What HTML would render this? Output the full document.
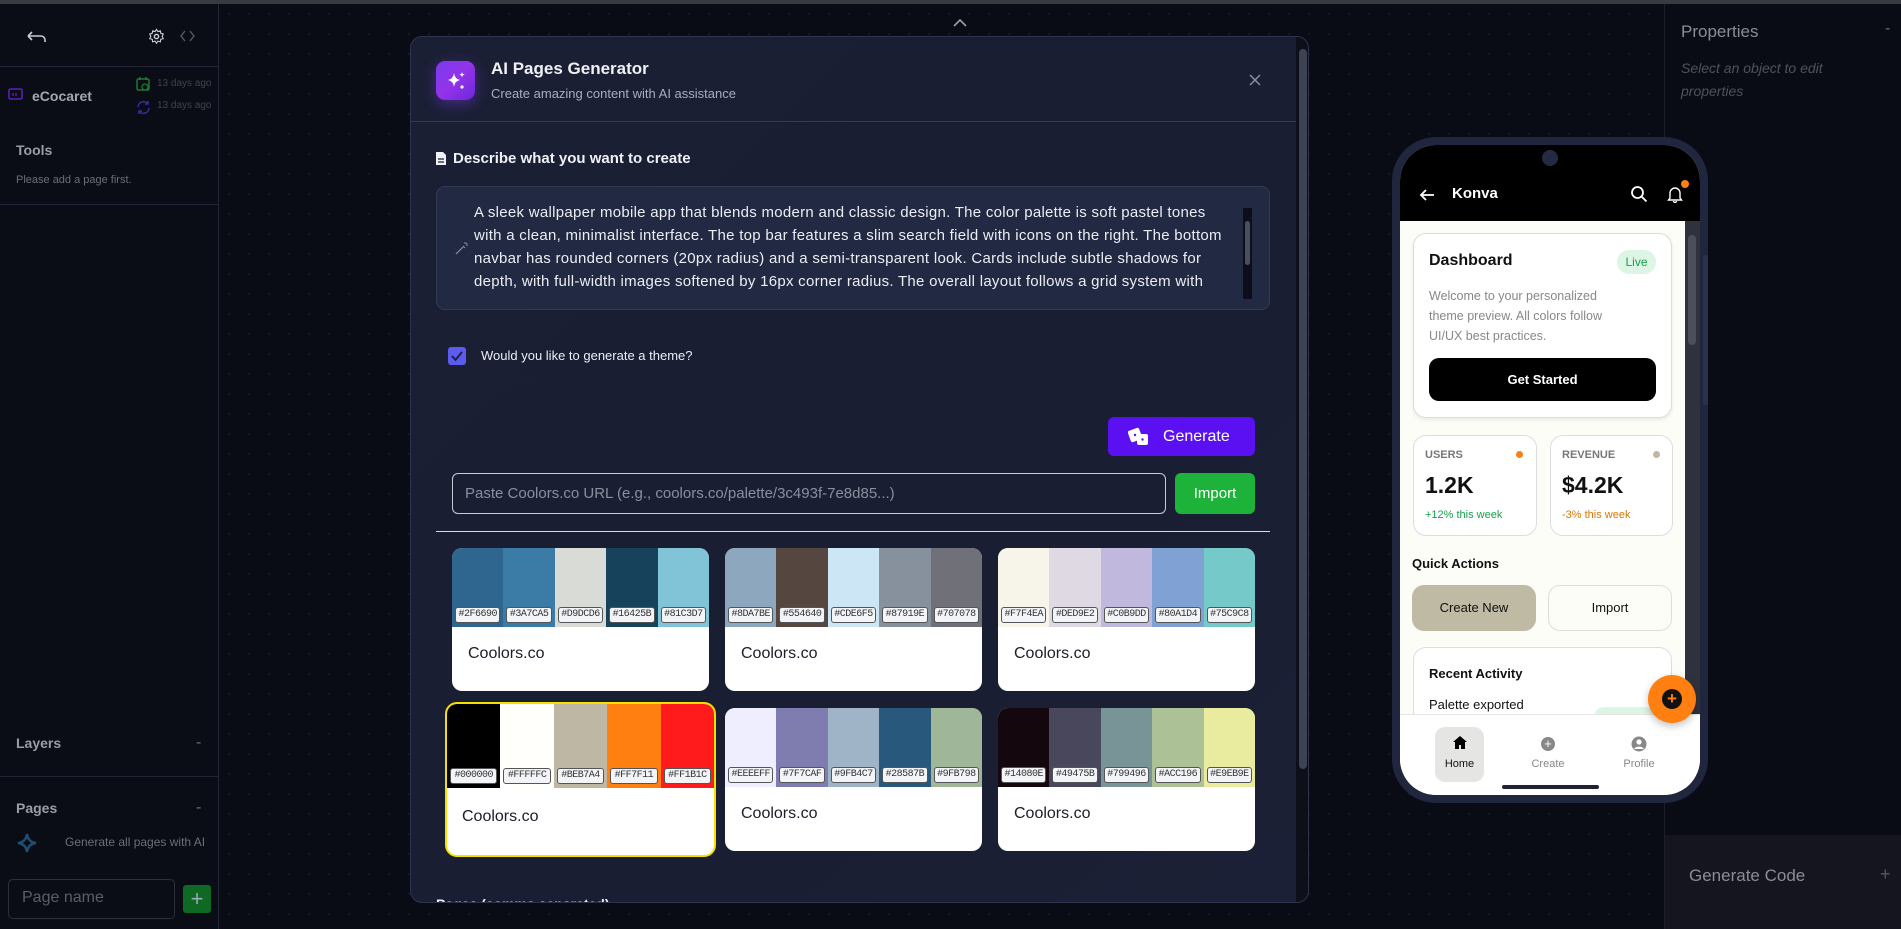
<!DOCTYPE html>
<html><head><meta charset="utf-8"><style>
*{box-sizing:border-box;margin:0;padding:0}
body{width:1901px;height:929px;overflow:hidden;background:#0a0c15;font-family:"Liberation Sans",sans-serif;position:relative;color:#e5e7eb}
.a{position:absolute}
.canvas{left:219px;top:4px;width:1445px;height:925px;background-color:#0a0c15;background-image:radial-gradient(#1a1d29 1px,transparent 1px);background-size:20px 20px}
.side{left:0;top:4px;width:219px;height:925px;background:#0b0d16;border-right:1px solid #232636}
.hr{height:1px;background:#232636}
.modal{left:410px;top:36px;width:899px;height:867px;background:linear-gradient(135deg,#1b1f34,#1a1e32 60%,#1b2036);border:1px solid #2e3450;border-radius:12px;overflow:hidden}
.card{position:absolute;width:257px;height:143px;background:#fff;border-radius:10px;overflow:hidden}
.strip{display:flex;height:79px}
.strip div{flex:1;position:relative}
.strip span{position:absolute;bottom:4px;left:3px;right:3px;height:16px;background:#f2f4f8;border:1px solid #555;border-radius:3px;font:10px "Liberation Mono",monospace;letter-spacing:-0.5px;color:#333;text-align:center;line-height:14px;overflow:hidden;white-space:nowrap}
.card p{position:absolute;left:16px;top:97px;color:#1a1d2a;font-size:16px}
.phone{left:1392px;top:137px;width:316px;height:666px;background:#20263d;border-radius:44px}
.screen{left:1400px;top:145px;width:300px;height:650px;background:#fdfdf8;border-radius:36px;overflow:hidden}
.pc{position:absolute;background:#fff;border:1px solid #ddd;border-radius:13px}
</style></head><body>
<div class="a" style="left:0;top:0;width:1901px;height:4px;background:#3a3b40"></div>
<div class="a canvas"></div>
<svg class="a" style="left:951px;top:17px" width="18" height="12"><path d="M3 9l6-6 6 6" stroke="#9aa0ad" stroke-width="1.6" fill="none"/></svg>

<div class="a side">
 <svg class="a" style="left:24px;top:24px" width="24" height="18"><path d="M4 8h13a4 4 0 0 1 4 4v2M4 8l4-4M4 8l4 4" stroke="#c9ccd3" stroke-width="1.6" fill="none"/></svg>
 <svg class="a" style="left:148px;top:24px" width="17" height="17" viewBox="0 0 24 24"><circle cx="12" cy="12" r="3" stroke="#c9ccd3" stroke-width="2" fill="none"/><path d="M12 2l2 3 3.5-1 .5 3.5 3.5 1-1.5 3.5 1.5 3-3.5 1-.5 3.5-3.5-1-2 3-2-3-3.5 1-.5-3.5-3.5-1 1.5-3-1.5-3.5 3.5-1 .5-3.5 3.5 1z" stroke="#c9ccd3" stroke-width="1.6" fill="none"/></svg>
 <svg class="a" style="left:180px;top:26px" width="15" height="12"><path d="M5 1L1 6l4 5M10 1l4 5-4 5" stroke="#5a5e6b" stroke-width="1.3" fill="none"/></svg>
 <div class="a hr" style="left:0;top:62px;width:219px"></div>
 <svg class="a" style="left:8px;top:83px" width="16" height="14"><rect x="1" y="2" width="13" height="10" rx="1.5" stroke="#5b21b6" stroke-width="1.6" fill="none"/><path d="M5 6v3M8 6v3" stroke="#5b21b6" stroke-width="1.4"/></svg>
 <div class="a" style="left:32px;top:84px;font-size:14px;font-weight:bold;color:#a4a7b0">eCocaret</div>
 <svg class="a" style="left:136px;top:73px" width="15" height="15"><rect x="1" y="2" width="12" height="11" rx="1.5" stroke="#1e7a2e" stroke-width="1.5" fill="none"/><path d="M4 0v3M10 0v3" stroke="#1e7a2e" stroke-width="1.5"/><circle cx="9" cy="10" r="3" stroke="#1e7a2e" stroke-width="1.3" fill="#0b0d16"/></svg>
 <div class="a" style="left:157px;top:74px;font-size:10px;color:#3e4250">13 days ago</div>
 <svg class="a" style="left:136px;top:96px" width="15" height="15"><path d="M2 7a5.5 5.5 0 0 1 10-3M13 8a5.5 5.5 0 0 1-10 3M12 1v3H9M3 14v-3h3" stroke="#3b2a9a" stroke-width="1.5" fill="none"/></svg>
 <div class="a" style="left:157px;top:96px;font-size:10px;color:#3e4250">13 days ago</div>
 <div class="a" style="left:16px;top:138px;font-size:14px;font-weight:bold;color:#9a9da6">Tools</div>
 <div class="a" style="left:16px;top:170px;font-size:11px;color:#6b6e78">Please add a page first.</div>
 <div class="a hr" style="left:0;top:200px;width:219px"></div>
 <div class="a" style="left:16px;top:731px;font-size:14px;font-weight:bold;color:#9a9da6">Layers</div>
 <div class="a" style="left:196px;top:730px;color:#6b6e78">-</div>
 <div class="a hr" style="left:0;top:772px;width:219px"></div>
 <div class="a" style="left:16px;top:796px;font-size:14px;font-weight:bold;color:#9a9da6">Pages</div>
 <div class="a" style="left:196px;top:795px;color:#6b6e78">-</div>
 <svg class="a" style="left:17px;top:829px" width="20" height="20"><path d="M10 1q1 8 9 9q-8 1-9 9q-1-8-9-9q8-1 9-9z" stroke="#1e4f6e" stroke-width="2.5" fill="none"/></svg>
 <div class="a" style="left:65px;top:831px;font-size:12px;color:#6b6e78">Generate all pages with AI</div>
 <div class="a" style="left:8px;top:875px;width:167px;height:40px;border:1px solid #2c2f3c;border-radius:5px"></div>
 <div class="a" style="left:22px;top:885px;font-size:16px;color:#5a5e6b">Page name</div>
 <div class="a" style="left:183px;top:881px;width:28px;height:28px;background:#0e6a22;border-radius:3px;color:#9ab;font-size:22px;text-align:center;line-height:27px">+</div>
</div>

<div class="a" style="left:1664px;top:4px;width:237px;height:925px;background:#0a0c15;border-left:1px solid #1c1f2a"></div>
<div class="a" style="left:1681px;top:22px;font-size:17px;color:#8a8d96">Properties</div>
<div class="a" style="left:1885px;top:20px;color:#6b6e78">-</div>
<div class="a" style="left:1681px;top:57px;font-size:14px;font-style:italic;color:#4e525e;line-height:23px">Select an object to edit<br>properties</div>
<div class="a" style="left:1665px;top:835px;width:236px;height:94px;background:#14151f"></div>
<div class="a" style="left:1689px;top:866px;font-size:17px;color:#8a8d96">Generate Code</div>
<div class="a" style="left:1880px;top:864px;font-size:18px;color:#555a66">+</div>

<div class="a modal">
 <div class="a" style="left:25px;top:24px;width:39px;height:39px;border-radius:9px;background:linear-gradient(135deg,#7c3aed,#9333ea 50%,#6d28d9);box-shadow:0 4px 14px rgba(124,58,237,.45)"></div>
 <svg class="a" style="left:34px;top:33px" width="22" height="22"><path d="M9 3q.8 6 6 7q-5.2 1-6 7q-.8-6-6-7q5.2-1 6-7z" fill="#fff"/><path d="M17 2l.7 2 2 .7-2 .7-.7 2-.7-2-2-.7 2-.7z" fill="#fff"/><circle cx="17" cy="17" r="1.6" fill="#fff"/></svg>
 <div class="a" style="left:80px;top:22px;font-size:17px;font-weight:bold;color:#f0f1f5">AI Pages Generator</div>
 <div class="a" style="left:80px;top:49px;font-size:13px;color:#a8adbd">Create amazing content with AI assistance</div>
 <svg class="a" style="left:837px;top:36px" width="14" height="14"><path d="M2 2l10 10M12 2L2 12" stroke="#8a8f9e" stroke-width="1.5"/></svg>
 <div class="a" style="left:0;top:84px;width:885px;height:1px;background:#343a52"></div>
 <svg class="a" style="left:24px;top:114px" width="12" height="15"><path d="M1 1h7l3 3v10H1z" fill="#f0f1f5"/><path d="M3 8h6M3 11h6" stroke="#1b1f34" stroke-width="1.2"/></svg>
 <div class="a" style="left:42px;top:113px;font-size:15px;font-weight:bold;color:#f0f1f5">Describe what you want to create</div>
 <div class="a" style="left:25px;top:149px;width:834px;height:124px;background:#222942;border:1px solid #323a55;border-radius:9px"></div>
 <svg class="a" style="left:44px;top:204px" width="14" height="14"><path d="M1 13l8-8" stroke="#8a8f9e" stroke-width="1.2"/><path d="M10 1v2M13 4h-2M12 2l-1 1M9 6l1 1" stroke="#8a8f9e" stroke-width="1"/></svg>
 <div class="a" style="left:63px;top:164px;width:762px;font-size:15px;line-height:23px;color:#eceef3;height:100px;overflow:hidden;letter-spacing:0.28px">A sleek wallpaper mobile app that blends modern and classic design. The color palette is soft pastel tones with a clean, minimalist interface. The top bar features a slim search field with icons on the right. The bottom navbar has rounded corners (20px radius) and a semi-transparent look. Cards include subtle shadows for depth, with full-width images softened by 16px corner radius. The overall layout follows a grid system with</div>
 <div class="a" style="left:832px;top:171px;width:9px;height:91px;background:#0c0f1a"></div>
 <div class="a" style="left:834px;top:184px;width:5px;height:44px;background:#4a4f60;border-radius:3px"></div>
 <div class="a" style="left:37px;top:310px;width:18px;height:18px;background:#5b5bf0;border-radius:3px"></div>
 <svg class="a" style="left:39px;top:313px" width="14" height="12"><path d="M2 6l3.5 4L12 2" stroke="#1b1f34" stroke-width="1.8" fill="none"/></svg>
 <div class="a" style="left:70px;top:311px;font-size:13px;color:#eceef3">Would you like to generate a theme?</div>
 <div class="a" style="left:697px;top:380px;width:147px;height:39px;background:#5b10f2;border-radius:6px;color:#fff;font-size:16px;line-height:39px;padding-left:55px">Generate</div>
 <svg class="a" style="left:717px;top:390px" width="22" height="20"><rect x="1" y="2" width="12" height="12" rx="2" transform="rotate(-20 7 8)" fill="#fff"/><rect x="9" y="7" width="11" height="11" rx="2" fill="#fff"/><circle cx="7" cy="8" r="1.2" fill="#5b10f2"/><circle cx="14.5" cy="12.5" r="1.2" fill="#5b10f2"/></svg>
 <div class="a" style="left:41px;top:436px;width:714px;height:41px;border:1px solid #c8ccd6;border-radius:6px;font-size:15px;color:#8a8f9e;line-height:39px;padding-left:12px">Paste Coolors.co URL (e.g., coolors.co/palette/3c493f-7e8d85...)</div>
 <div class="a" style="left:764px;top:436px;width:80px;height:41px;background:#1db33b;border-radius:6px;color:#fff;font-size:15px;text-align:center;line-height:41px">Import</div>
 <div class="a" style="left:25px;top:494px;width:834px;height:1px;background:#d8dbe2"></div>

 <div class="card" style="left:41px;top:511px"><div class="strip"><div style="background:#2F6690"><span>#2F6690</span></div><div style="background:#3A7CA5"><span>#3A7CA5</span></div><div style="background:#D9DCD6"><span>#D9DCD6</span></div><div style="background:#16425B"><span>#16425B</span></div><div style="background:#81C3D7"><span>#81C3D7</span></div></div><p>Coolors.co</p></div>
 <div class="card" style="left:314px;top:511px"><div class="strip"><div style="background:#8DA7BE"><span>#8DA7BE</span></div><div style="background:#554640"><span>#554640</span></div><div style="background:#CDE6F5"><span>#CDE6F5</span></div><div style="background:#87919E"><span>#87919E</span></div><div style="background:#707078"><span>#707078</span></div></div><p>Coolors.co</p></div>
 <div class="card" style="left:587px;top:511px"><div class="strip"><div style="background:#F7F4EA"><span>#F7F4EA</span></div><div style="background:#DED9E2"><span>#DED9E2</span></div><div style="background:#C0B9DD"><span>#C0B9DD</span></div><div style="background:#80A1D4"><span>#80A1D4</span></div><div style="background:#75C9C8"><span>#75C9C8</span></div></div><p>Coolors.co</p></div>
 <div class="card" style="left:34px;top:665px;width:271px;height:155px;border:2px solid #f5e000;border-radius:12px"><div class="strip" style="height:84px"><div style="background:#000000"><span>#000000</span></div><div style="background:#FFFFFC"><span>#FFFFFC</span></div><div style="background:#BEB7A4"><span>#BEB7A4</span></div><div style="background:#FF7F11"><span>#FF7F11</span></div><div style="background:#FF1B1C"><span>#FF1B1C</span></div></div><p style="top:104px;left:15px">Coolors.co</p></div>
 <div class="card" style="left:314px;top:671px"><div class="strip"><div style="background:#EEEEFF"><span>#EEEEFF</span></div><div style="background:#7F7CAF"><span>#7F7CAF</span></div><div style="background:#9FB4C7"><span>#9FB4C7</span></div><div style="background:#28587B"><span>#28587B</span></div><div style="background:#9FB798"><span>#9FB798</span></div></div><p>Coolors.co</p></div>
 <div class="card" style="left:587px;top:671px"><div class="strip"><div style="background:#14080E"><span>#14080E</span></div><div style="background:#49475B"><span>#49475B</span></div><div style="background:#799496"><span>#799496</span></div><div style="background:#ACC196"><span>#ACC196</span></div><div style="background:#E9EB9E"><span>#E9EB9E</span></div></div><p>Coolors.co</p></div>
 <div class="a" style="left:25px;top:859px;font-size:14px;font-weight:bold;color:#eceef3">Pages (comma separated)</div>
 <div class="a" style="left:885px;top:0;width:14px;height:867px;background:#0d1019"></div>
 <div class="a" style="left:888px;top:12px;width:8px;height:720px;background:#3e4352;border-radius:4px"></div>
</div>

<div class="a phone"></div>
<div class="a" style="left:1703px;top:255px;width:5px;height:150px;background:#2a3150;border-radius:2px"></div>
<div class="a screen">
 <div class="a" style="left:0;top:0;width:300px;height:76px;background:#000"></div>
 <div class="a" style="left:142px;top:5px;width:16px;height:16px;border-radius:50%;background:#242a42"></div>
 <svg class="a" style="left:18px;top:42px" width="18" height="16"><path d="M16 8H3M8 3L3 8l5 5" stroke="#fff" stroke-width="1.8" fill="none"/></svg>
 <div class="a" style="left:52px;top:40px;font-size:15px;font-weight:bold;color:#fff">Konva</div>
 <svg class="a" style="left:230px;top:40px" width="18" height="18"><circle cx="7.5" cy="7.5" r="5.5" stroke="#fff" stroke-width="1.8" fill="none"/><path d="M11.5 11.5l5 5" stroke="#fff" stroke-width="1.8"/></svg>
 <svg class="a" style="left:266px;top:40px" width="18" height="18"><path d="M4 13V8a5 5 0 0 1 10 0v5l1.5 2h-13zM7.5 16a1.5 1.5 0 0 0 3 0" stroke="#fff" stroke-width="1.4" fill="none"/></svg>
 <div class="a" style="left:281px;top:35px;width:8px;height:8px;border-radius:50%;background:#ff7f11"></div>
 <div class="a" style="left:285px;top:76px;width:15px;height:493px;background:#2e323c"></div>
 <div class="a" style="left:288px;top:90px;width:8px;height:110px;background:#4a4f5b;border-radius:4px"></div>
 <div class="pc" style="left:13px;top:88px;width:259px;height:185px;box-shadow:0 2px 4px rgba(0,0,0,.08)"></div>
 <div class="a" style="left:29px;top:107px;font-size:16px;font-weight:bold;color:#111">Dashboard</div>
 <div class="a" style="left:217px;top:105px;width:39px;height:24px;border-radius:12px;background:#dcf5e4;color:#15a34a;font-size:12px;text-align:center;line-height:24px">Live</div>
 <div class="a" style="left:29px;top:141px;width:200px;font-size:12.5px;line-height:20px;color:#888">Welcome to your personalized theme preview. All colors follow UI/UX best practices.</div>
 <div class="a" style="left:29px;top:213px;width:227px;height:43px;background:#000;border-radius:10px;color:#fff;font-size:13px;font-weight:bold;text-align:center;line-height:43px">Get Started</div>
 <div class="pc" style="left:13px;top:290px;width:124px;height:101px"></div>
 <div class="a" style="left:25px;top:304px;font-size:11px;font-weight:bold;color:#777">USERS</div>
 <div class="a" style="left:116px;top:306px;width:7px;height:7px;border-radius:50%;background:#ff7f11"></div>
 <div class="a" style="left:25px;top:327px;font-size:23px;font-weight:bold;color:#111">1.2K</div>
 <div class="a" style="left:25px;top:364px;font-size:11px;color:#16a34a">+12% this week</div>
 <div class="pc" style="left:150px;top:290px;width:123px;height:101px"></div>
 <div class="a" style="left:162px;top:304px;font-size:11px;font-weight:bold;color:#777">REVENUE</div>
 <div class="a" style="left:253px;top:306px;width:7px;height:7px;border-radius:50%;background:#beb7a4"></div>
 <div class="a" style="left:162px;top:327px;font-size:23px;font-weight:bold;color:#111">$4.2K</div>
 <div class="a" style="left:162px;top:364px;font-size:11px;color:#d97706">-3% this week</div>
 <div class="a" style="left:12px;top:411px;font-size:13px;font-weight:bold;color:#111">Quick Actions</div>
 <div class="a" style="left:12px;top:440px;width:124px;height:46px;background:#bebaa4;border-radius:12px;font-size:13px;color:#111;text-align:center;line-height:46px">Create New</div>
 <div class="a" style="left:148px;top:440px;width:124px;height:46px;border:1px solid #ddd;border-radius:12px;font-size:13px;color:#111;text-align:center;line-height:44px">Import</div>
 <div class="pc" style="left:13px;top:502px;width:259px;height:90px"></div>
 <div class="a" style="left:29px;top:521px;font-size:13px;font-weight:bold;color:#111">Recent Activity</div>
 <div class="a" style="left:29px;top:552px;font-size:13px;color:#111">Palette exported</div>
 <div class="a" style="left:194px;top:562px;width:60px;height:20px;border-radius:10px;background:#dcf5e4"></div>
 <div class="a" style="left:0;top:569px;width:300px;height:81px;background:#fff;border-top:1px solid #e5e5e5"></div>
 <div class="a" style="left:35px;top:582px;width:49px;height:55px;background:#e5e5e3;border-radius:10px"></div>
 <svg class="a" style="left:52px;top:590px" width="16" height="15"><path d="M8 1L1 7h2v7h4v-4h2v4h4V7h2z" fill="#000"/></svg>
 <div class="a" style="left:35px;top:613px;width:49px;text-align:center;font-size:11px;color:#111">Home</div>
 <div class="a" style="left:141px;top:592px;width:14px;height:14px;border-radius:50%;background:#888;color:#fff;font-size:13px;text-align:center;line-height:14px">+</div>
 <div class="a" style="left:126px;top:613px;width:44px;text-align:center;font-size:11px;color:#888">Create</div>
 <svg class="a" style="left:231px;top:591px" width="16" height="16"><circle cx="8" cy="8" r="7.5" fill="#888"/><circle cx="8" cy="6" r="2.6" fill="#fff"/><path d="M3 13a5.5 4 0 0 1 10 0" fill="#fff"/></svg>
 <div class="a" style="left:214px;top:613px;width:50px;text-align:center;font-size:11px;color:#888">Profile</div>
 <div class="a" style="left:102px;top:640px;width:97px;height:4px;border-radius:2px;background:#1e2338"></div>
</div>
<div class="a" style="left:1648px;top:675px;width:48px;height:48px;border-radius:50%;background:#ff7f11;box-shadow:0 3px 8px rgba(0,0,0,.25)"></div>
<div class="a" style="left:1662px;top:689px;width:20px;height:20px;border-radius:50%;background:#111;color:#ff7f11;font-size:17px;font-weight:bold;text-align:center;line-height:20px">+</div>
</body></html>
